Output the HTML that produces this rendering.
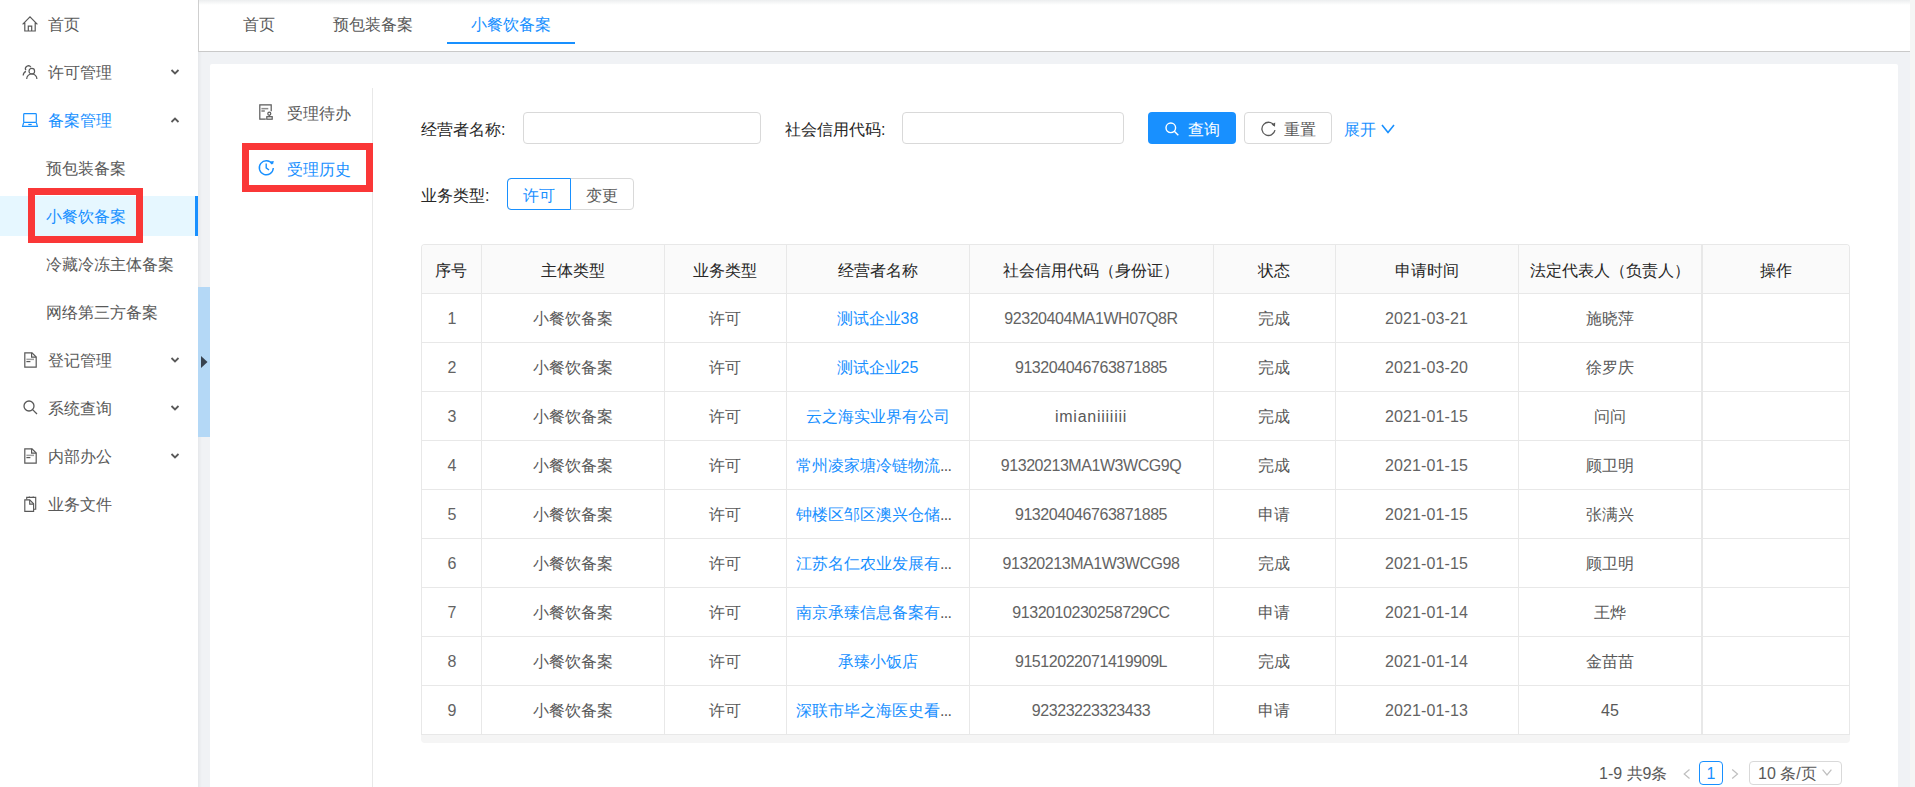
<!DOCTYPE html>
<html><head><meta charset="utf-8"><style>
*{box-sizing:border-box;margin:0;padding:0}
html,body{width:1915px;height:787px;overflow:hidden}
body{position:relative;background:#f0f2f5;font-family:"Liberation Sans",sans-serif;font-size:16px;color:#595959}
.a{position:absolute}
.t{position:absolute;line-height:24px;height:24px;white-space:nowrap}
.c{position:absolute;line-height:24px;height:24px;white-space:nowrap;text-align:center}
#side{left:0;top:0;width:198px;height:787px;background:#fff}
#handle{left:198px;top:287px;width:12px;height:150px;background:#b4d8f6}
#tabs{left:198px;top:0;width:1712px;height:52px;background:#fff;border-left:1px solid #cfcfcf;border-bottom:1px solid #c9c9c9}
#topshadow{left:199px;top:0;width:1711px;height:5px;background:linear-gradient(#eceeef,rgba(255,255,255,0))}
#rstrip{left:1910px;top:0;width:5px;height:787px;background:#f5f5f5}
#card{left:210px;top:64px;width:1688px;height:740px;background:#fff;border-radius:2px}
.blue{color:#1890ff}
.dark{color:#262626}
.red{position:absolute;border:7px solid #fa3737}
.inp{position:absolute;border:1px solid #d9d9d9;border-radius:4px;background:#fff}
svg{position:absolute;overflow:visible}
.num{letter-spacing:-0.45px;color:#636363}
.dt{letter-spacing:0.1px;color:#636363}
</style></head><body>
<div id="side" class="a"></div>
<div class="a" style="left:0;top:196px;width:198px;height:40px;background:#e6f7ff"></div>
<div class="a" style="left:195px;top:196px;width:3px;height:40px;background:#1890ff"></div>
<div class="t " style="left:48px;top:12.5px;">首页</div>
<div class="t " style="left:48px;top:60.5px;">许可管理</div>
<div class="t blue" style="left:48px;top:108.5px;">备案管理</div>
<div class="t " style="left:46px;top:156.5px;">预包装备案</div>
<div class="t blue" style="left:46px;top:204.5px;">小餐饮备案</div>
<div class="t " style="left:46px;top:252.5px;">冷藏冷冻主体备案</div>
<div class="t " style="left:46px;top:300.5px;">网络第三方备案</div>
<div class="t " style="left:48px;top:348.5px;">登记管理</div>
<div class="t " style="left:48px;top:396.5px;">系统查询</div>
<div class="t " style="left:48px;top:444.5px;">内部办公</div>
<div class="t " style="left:48px;top:492.5px;">业务文件</div>
<svg style="left:22px;top:16px" width="16" height="16" viewBox="0 0 16 16"><path d="M0.6 8.4 L8 0.9 L15.4 8.4 M2.8 6.8 V15 H13.2 V6.8 M6.3 15 V10.2 H9.7 V15" fill="none" stroke="#595959" stroke-width="1.2"/></svg>
<svg style="left:22px;top:64px" width="16" height="16" viewBox="0 0 16 16"><g fill="none" stroke="#595959" stroke-width="1.2"><path d="M3.9 6.3 A2.9 2.9 0 1 1 8.9 3.2"/><path d="M1.2 11.6 A4.6 4.6 0 0 1 3.9 7.4"/><circle cx="9.8" cy="7.2" r="2.8"/><path d="M4.7 15 A5.1 5.1 0 0 1 14.9 15"/></g></svg>
<svg style="left:22px;top:113px" width="16" height="14" viewBox="0 0 16 14"><g fill="none" stroke="#1890ff" stroke-width="1.2"><rect x="1.7" y="0.6" width="12.6" height="8.8" rx="0.8"/><path d="M1.7 9.4 L0.6 13.3 H15.4 L14.3 9.4"/><path d="M6.3 11.5 H9.7"/></g></svg>
<svg style="left:24px;top:352px" width="13" height="16" viewBox="0 0 13 16"><g fill="none" stroke="#595959" stroke-width="1.2"><path d="M0.8 0.8 H8 L12.2 5 V15.2 H0.8 Z"/><path d="M7.6 0.8 V5.2 H12.2"/></g><rect x="2.4" y="6.6" width="7.6" height="1.5" fill="#a0a0a0"/><rect x="2.4" y="9" width="4" height="1.2" fill="#595959"/></svg>
<svg style="left:24px;top:448px" width="13" height="16" viewBox="0 0 13 16"><g fill="none" stroke="#595959" stroke-width="1.2"><path d="M0.8 0.8 H8 L12.2 5 V15.2 H0.8 Z"/><path d="M7.6 0.8 V5.2 H12.2"/></g><rect x="2.4" y="6.6" width="7.6" height="1.5" fill="#a0a0a0"/><rect x="2.4" y="9" width="4" height="1.2" fill="#595959"/></svg>
<svg style="left:23px;top:400px" width="15" height="15" viewBox="0 0 15 15"><g fill="none" stroke="#595959" stroke-width="1.3"><circle cx="6" cy="6" r="5"/><path d="M9.6 9.6 L14 14"/></g></svg>
<svg style="left:24px;top:496px" width="13" height="16" viewBox="0 0 13 16"><g fill="none" stroke="#595959" stroke-width="1.15"><path d="M2.7 3.6 V1.4 H11.7 V13.2 H9.7"/><path d="M0.8 3.9 H5.7 L9.6 7.8 V15.3 H0.8 Z"/><path d="M5.7 3.9 V8.1 H9.6"/><path d="M5.3 0.4 V1.6 M9.2 0.4 V1.6" stroke-width="0.9"/></g></svg>
<svg style="left:170px;top:68.5px" width="10" height="6" viewBox="0 0 10 6"><path d="M1.5 1 L5 4.5 L8.5 1" fill="none" stroke="#595959" stroke-width="1.8"/></svg>
<svg style="left:170px;top:356.5px" width="10" height="6" viewBox="0 0 10 6"><path d="M1.5 1 L5 4.5 L8.5 1" fill="none" stroke="#595959" stroke-width="1.8"/></svg>
<svg style="left:170px;top:404.5px" width="10" height="6" viewBox="0 0 10 6"><path d="M1.5 1 L5 4.5 L8.5 1" fill="none" stroke="#595959" stroke-width="1.8"/></svg>
<svg style="left:170px;top:452.5px" width="10" height="6" viewBox="0 0 10 6"><path d="M1.5 1 L5 4.5 L8.5 1" fill="none" stroke="#595959" stroke-width="1.8"/></svg>
<svg style="left:170px;top:116.5px" width="10" height="6" viewBox="0 0 10 6"><path d="M1.5 5 L5 1.5 L8.5 5" fill="none" stroke="#595959" stroke-width="1.8"/></svg>
<div class="a" style="left:198px;top:52px;width:4px;height:735px;background:linear-gradient(90deg,#e6e8eb,#f0f2f5)"></div>
<div id="handle" class="a"></div>
<svg style="left:201px;top:356px" width="7" height="12" viewBox="0 0 7 12"><path d="M0 0 L6.5 6 L0 12 Z" fill="#37424f"/></svg>
<div id="tabs" class="a"></div>
<div id="topshadow" class="a"></div>
<div id="rstrip" class="a"></div>
<div class="t " style="left:243px;top:12.5px;">首页</div>
<div class="t " style="left:333px;top:12.5px;">预包装备案</div>
<div class="t blue" style="left:471px;top:12.5px;">小餐饮备案</div>
<div class="a" style="left:447px;top:42px;width:128px;height:2px;background:#1890ff"></div>
<div id="card" class="a"></div>
<div class="a" style="left:372px;top:88px;width:1px;height:700px;background:#e8e8e8"></div>
<svg style="left:259px;top:104px" width="15" height="16" viewBox="0 0 15 16"><g fill="none" stroke="#595959" stroke-width="1.2"><path d="M6.8 15.2 H0.8 V0.8 H12.2 V7.2"/><path d="M2.4 7 H5.8"/><circle cx="10.3" cy="9.7" r="1.5"/><path d="M10.3 11.2 V12.7"/><rect x="7.8" y="12.7" width="5.4" height="2.5"/></g><rect x="2.4" y="3.9" width="6.9" height="1.5" fill="#8c8c8c"/></svg>
<div class="t " style="left:287px;top:101.5px;">受理待办</div>
<svg style="left:258px;top:159px" width="17" height="17" viewBox="0 0 17 17"><g fill="none" stroke="#1890ff" stroke-width="1.4"><path d="M14.2 5 A7 7 0 1 0 15.3 9"/><path d="M8.2 4.5 V8.8 L11 11"/></g><path d="M12.5 2.5 L15.8 2 L15 5.5 Z" fill="#1890ff"/></svg>
<div class="t blue" style="left:287px;top:158px;">受理历史</div>
<div class="t dark" style="left:421px;top:117.5px;">经营者名称:</div>
<div class="inp" style="left:523px;top:112px;width:238px;height:32px"></div>
<div class="t dark" style="left:785px;top:117.5px;">社会信用代码:</div>
<div class="inp" style="left:902px;top:112px;width:222px;height:32px"></div>
<div class="a" style="left:1148px;top:112px;width:88px;height:32px;background:#1890ff;border-radius:4px"></div>
<svg style="left:1165px;top:122px" width="14" height="14" viewBox="0 0 14 14"><g fill="none" stroke="#fff" stroke-width="1.4"><circle cx="5.8" cy="5.8" r="4.8"/><path d="M9.3 9.3 L13.3 13.3"/></g></svg>
<div class="t " style="left:1188px;top:117.5px;color:#fff">查询</div>
<div class="inp" style="left:1244px;top:112px;width:88px;height:32px"></div>
<svg style="left:1261px;top:121px" width="15" height="16" viewBox="0 0 15 16"><g fill="none" stroke="#595959" stroke-width="1.3"><path d="M13.2 4.5 A6.6 6.6 0 1 0 14 9.2"/></g><path d="M10.5 3.6 L14.2 1.6 L14 5.8 Z" fill="#595959"/></svg>
<div class="t " style="left:1284px;top:117.5px;">重置</div>
<div class="t blue" style="left:1344px;top:117.5px;">展开</div>
<svg style="left:1381px;top:124px" width="14" height="10" viewBox="0 0 14 10"><path d="M1 1 L7 8.5 L13 1" fill="none" stroke="#1890ff" stroke-width="1.6"/></svg>
<div class="t dark" style="left:421px;top:183.5px;">业务类型:</div>
<div class="inp" style="left:507px;top:178px;width:127px;height:32px"></div>
<div class="a" style="left:507px;top:178px;width:64px;height:32px;border:1px solid #1890ff;border-radius:4px 0 0 4px"></div>
<div class="t blue" style="left:523px;top:183.5px;">许可</div>
<div class="t " style="left:586px;top:183.5px;">变更</div>
<div class="a" style="left:421px;top:244px;width:1429px;height:491px;border:1px solid #e8e8e8;border-bottom:none;border-radius:4px 4px 0 0;background:#fff"></div>
<div class="a" style="left:422px;top:245px;width:1427px;height:48px;background:#fafafa;border-radius:3px 3px 0 0"></div>
<div class="a" style="left:421px;top:293px;width:1429px;height:1px;background:#e8e8e8"></div>
<div class="a" style="left:421px;top:342px;width:1429px;height:1px;background:#e8e8e8"></div>
<div class="a" style="left:421px;top:391px;width:1429px;height:1px;background:#e8e8e8"></div>
<div class="a" style="left:421px;top:440px;width:1429px;height:1px;background:#e8e8e8"></div>
<div class="a" style="left:421px;top:489px;width:1429px;height:1px;background:#e8e8e8"></div>
<div class="a" style="left:421px;top:538px;width:1429px;height:1px;background:#e8e8e8"></div>
<div class="a" style="left:421px;top:587px;width:1429px;height:1px;background:#e8e8e8"></div>
<div class="a" style="left:421px;top:636px;width:1429px;height:1px;background:#e8e8e8"></div>
<div class="a" style="left:421px;top:685px;width:1429px;height:1px;background:#e8e8e8"></div>
<div class="a" style="left:421px;top:734px;width:1429px;height:1px;background:#e8e8e8"></div>
<div class="a" style="left:481px;top:244px;width:1px;height:490px;background:#e8e8e8"></div>
<div class="a" style="left:664px;top:244px;width:1px;height:490px;background:#e8e8e8"></div>
<div class="a" style="left:786px;top:244px;width:1px;height:490px;background:#e8e8e8"></div>
<div class="a" style="left:969px;top:244px;width:1px;height:490px;background:#e8e8e8"></div>
<div class="a" style="left:1213px;top:244px;width:1px;height:490px;background:#e8e8e8"></div>
<div class="a" style="left:1335px;top:244px;width:1px;height:490px;background:#e8e8e8"></div>
<div class="a" style="left:1518px;top:244px;width:1px;height:490px;background:#e8e8e8"></div>
<div class="a" style="left:1701px;top:244px;width:2px;height:490px;background:#e8e8e8"></div>
<div class="c dark" style="left:421px;top:258.5px;width:60px;">序号</div>
<div class="c dark" style="left:481px;top:258.5px;width:183px;">主体类型</div>
<div class="c dark" style="left:664px;top:258.5px;width:122px;">业务类型</div>
<div class="c dark" style="left:786px;top:258.5px;width:183px;">经营者名称</div>
<div class="c dark" style="left:969px;top:258.5px;width:244px;">社会信用代码（身份证）</div>
<div class="c dark" style="left:1213px;top:258.5px;width:122px;">状态</div>
<div class="c dark" style="left:1335px;top:258.5px;width:183px;">申请时间</div>
<div class="c dark" style="left:1518px;top:258.5px;width:184px;">法定代表人（负责人）</div>
<div class="c dark" style="left:1702px;top:258.5px;width:148px;">操作</div>
<div class="c " style="left:422px;top:306.5px;width:60px;color:#636363">1</div>
<div class="c " style="left:481px;top:306.5px;width:183px;">小餐饮备案</div>
<div class="c " style="left:664px;top:306.5px;width:122px;">许可</div>
<div class="c blue" style="left:786px;top:306.5px;width:183px;">测试企业38</div>
<div class="c num" style="left:969px;top:306.5px;width:244px;">92320404MA1WH07Q8R</div>
<div class="c " style="left:1213px;top:306.5px;width:122px;">完成</div>
<div class="c dt" style="left:1335px;top:306.5px;width:183px;">2021-03-21</div>
<div class="c " style="left:1518px;top:306.5px;width:184px;">施晓萍</div>
<div class="c " style="left:422px;top:355.5px;width:60px;color:#636363">2</div>
<div class="c " style="left:481px;top:355.5px;width:183px;">小餐饮备案</div>
<div class="c " style="left:664px;top:355.5px;width:122px;">许可</div>
<div class="c blue" style="left:786px;top:355.5px;width:183px;">测试企业25</div>
<div class="c num" style="left:969px;top:355.5px;width:244px;">913204046763871885</div>
<div class="c " style="left:1213px;top:355.5px;width:122px;">完成</div>
<div class="c dt" style="left:1335px;top:355.5px;width:183px;">2021-03-20</div>
<div class="c " style="left:1518px;top:355.5px;width:184px;">徐罗庆</div>
<div class="c " style="left:422px;top:404.5px;width:60px;color:#636363">3</div>
<div class="c " style="left:481px;top:404.5px;width:183px;">小餐饮备案</div>
<div class="c " style="left:664px;top:404.5px;width:122px;">许可</div>
<div class="c blue" style="left:786px;top:404.5px;width:183px;">云之海实业界有公司</div>
<div class="c " style="left:969px;top:404.5px;width:244px;letter-spacing:0.75px">imianiiiiiii</div>
<div class="c " style="left:1213px;top:404.5px;width:122px;">完成</div>
<div class="c dt" style="left:1335px;top:404.5px;width:183px;">2021-01-15</div>
<div class="c " style="left:1518px;top:404.5px;width:184px;">问问</div>
<div class="c " style="left:422px;top:453.5px;width:60px;color:#636363">4</div>
<div class="c " style="left:481px;top:453.5px;width:183px;">小餐饮备案</div>
<div class="c " style="left:664px;top:453.5px;width:122px;">许可</div>
<div class="t" style="left:796px;top:453.5px"><span class="blue">常州凌家塘冷链物流</span><span style="letter-spacing:-0.7px">...</span></div>
<div class="c num" style="left:969px;top:453.5px;width:244px;">91320213MA1W3WCG9Q</div>
<div class="c " style="left:1213px;top:453.5px;width:122px;">完成</div>
<div class="c dt" style="left:1335px;top:453.5px;width:183px;">2021-01-15</div>
<div class="c " style="left:1518px;top:453.5px;width:184px;">顾卫明</div>
<div class="c " style="left:422px;top:502.5px;width:60px;color:#636363">5</div>
<div class="c " style="left:481px;top:502.5px;width:183px;">小餐饮备案</div>
<div class="c " style="left:664px;top:502.5px;width:122px;">许可</div>
<div class="t" style="left:796px;top:502.5px"><span class="blue">钟楼区邹区澳兴仓储</span><span style="letter-spacing:-0.7px">...</span></div>
<div class="c num" style="left:969px;top:502.5px;width:244px;">913204046763871885</div>
<div class="c " style="left:1213px;top:502.5px;width:122px;">申请</div>
<div class="c dt" style="left:1335px;top:502.5px;width:183px;">2021-01-15</div>
<div class="c " style="left:1518px;top:502.5px;width:184px;">张满兴</div>
<div class="c " style="left:422px;top:551.5px;width:60px;color:#636363">6</div>
<div class="c " style="left:481px;top:551.5px;width:183px;">小餐饮备案</div>
<div class="c " style="left:664px;top:551.5px;width:122px;">许可</div>
<div class="t" style="left:796px;top:551.5px"><span class="blue">江苏名仁农业发展有</span><span style="letter-spacing:-0.7px">...</span></div>
<div class="c num" style="left:969px;top:551.5px;width:244px;">91320213MA1W3WCG98</div>
<div class="c " style="left:1213px;top:551.5px;width:122px;">完成</div>
<div class="c dt" style="left:1335px;top:551.5px;width:183px;">2021-01-15</div>
<div class="c " style="left:1518px;top:551.5px;width:184px;">顾卫明</div>
<div class="c " style="left:422px;top:600.5px;width:60px;color:#636363">7</div>
<div class="c " style="left:481px;top:600.5px;width:183px;">小餐饮备案</div>
<div class="c " style="left:664px;top:600.5px;width:122px;">许可</div>
<div class="t" style="left:796px;top:600.5px"><span class="blue">南京承臻信息备案有</span><span style="letter-spacing:-0.7px">...</span></div>
<div class="c num" style="left:969px;top:600.5px;width:244px;">9132010230258729CC</div>
<div class="c " style="left:1213px;top:600.5px;width:122px;">申请</div>
<div class="c dt" style="left:1335px;top:600.5px;width:183px;">2021-01-14</div>
<div class="c " style="left:1518px;top:600.5px;width:184px;">王烨</div>
<div class="c " style="left:422px;top:649.5px;width:60px;color:#636363">8</div>
<div class="c " style="left:481px;top:649.5px;width:183px;">小餐饮备案</div>
<div class="c " style="left:664px;top:649.5px;width:122px;">许可</div>
<div class="c blue" style="left:786px;top:649.5px;width:183px;">承臻小饭店</div>
<div class="c num" style="left:969px;top:649.5px;width:244px;">91512022071419909L</div>
<div class="c " style="left:1213px;top:649.5px;width:122px;">完成</div>
<div class="c dt" style="left:1335px;top:649.5px;width:183px;">2021-01-14</div>
<div class="c " style="left:1518px;top:649.5px;width:184px;">金苗苗</div>
<div class="c " style="left:422px;top:698.5px;width:60px;color:#636363">9</div>
<div class="c " style="left:481px;top:698.5px;width:183px;">小餐饮备案</div>
<div class="c " style="left:664px;top:698.5px;width:122px;">许可</div>
<div class="t" style="left:796px;top:698.5px"><span class="blue">深联市毕之海医史看</span><span style="letter-spacing:-0.7px">...</span></div>
<div class="c num" style="left:969px;top:698.5px;width:244px;">92323223323433</div>
<div class="c " style="left:1213px;top:698.5px;width:122px;">申请</div>
<div class="c dt" style="left:1335px;top:698.5px;width:183px;">2021-01-13</div>
<div class="c " style="left:1518px;top:698.5px;width:184px;">45</div>
<div class="a" style="left:421px;top:735px;width:1429px;height:8px;background:#f5f5f5;border-radius:0 0 4px 4px"></div>
<div class="t " style="left:1599px;top:762px;">1-9 共9条</div>
<svg style="left:1683px;top:769px" width="8" height="10" viewBox="0 0 8 10"><path d="M6.5 0.5 L1.2 5 L6.5 9.5" fill="none" stroke="#bfbfbf" stroke-width="1.2"/></svg>
<div class="a" style="left:1699px;top:761px;width:24px;height:24px;border:1px solid #1890ff;border-radius:4px"></div>
<div class="c blue" style="left:1699px;top:762px;width:24px;">1</div>
<svg style="left:1731px;top:769px" width="8" height="10" viewBox="0 0 8 10"><path d="M1.2 0.5 L6.5 5 L1.2 9.5" fill="none" stroke="#bfbfbf" stroke-width="1.2"/></svg>
<div class="inp" style="left:1749px;top:761px;width:93px;height:24px"></div>
<div class="t " style="left:1758px;top:762px;">10 条/页</div>
<svg style="left:1822px;top:769px" width="10" height="7" viewBox="0 0 10 7"><path d="M0.6 0.6 L5 6 L9.4 0.6" fill="none" stroke="#bfbfbf" stroke-width="1.2"/></svg>
<div class="red" style="left:28px;top:188px;width:115px;height:55px"></div>
<div class="red" style="left:242px;top:143px;width:131px;height:49px"></div>
</body></html>
